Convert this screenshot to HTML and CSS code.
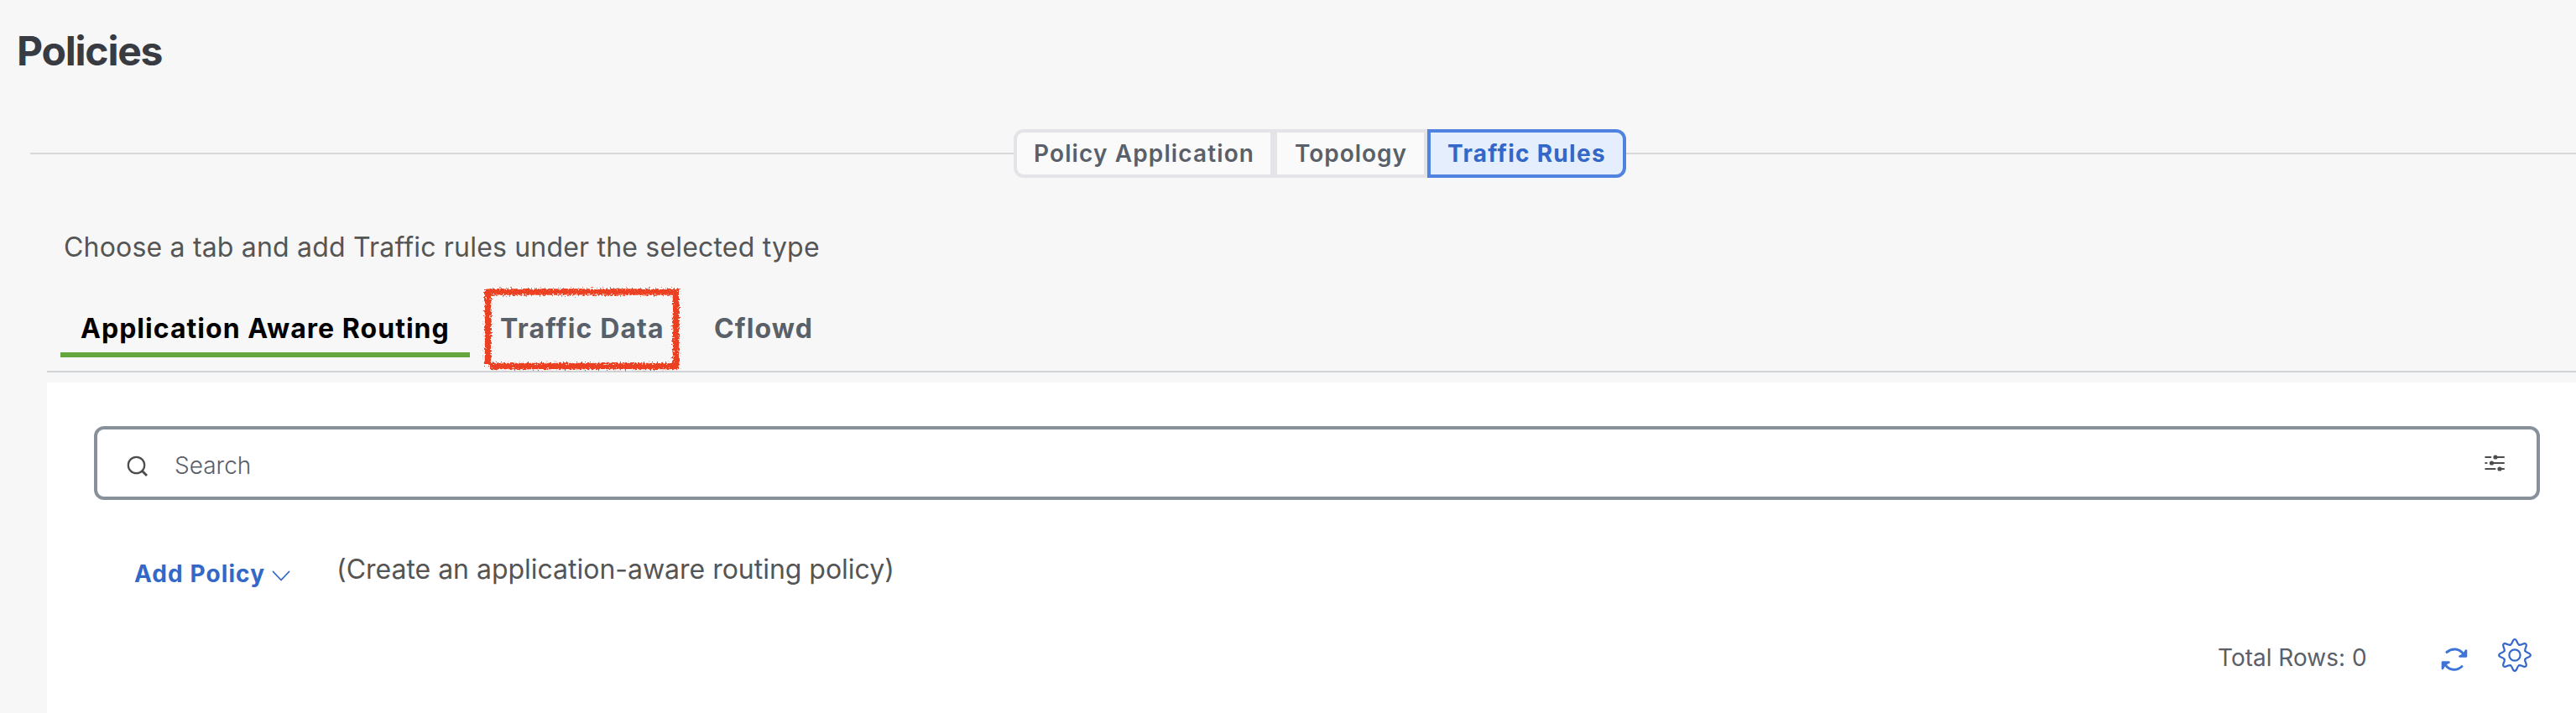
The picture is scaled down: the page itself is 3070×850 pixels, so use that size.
FILE: index.html
```
<!DOCTYPE html>
<html lang="en">
<head>
<meta charset="utf-8">
<title>Policies</title>
<link rel="stylesheet" href="styles.css">
</head>
<body>
<h1 class="title">Policies</h1>
<div class="steps">
  <div class="segments">
    <button class="seg first">Policy Application</button>
    <button class="seg second">Topology</button>
    <button class="seg active">Traffic Rules</button>
  </div>
</div>
<p class="hint">Choose a tab and add Traffic rules under the selected type</p>
<nav class="tabs">
  <a class="tab selected">Application Aware Routing</a>
  <a class="tab data">Traffic Data
    <svg class="marker" width="240" height="104" viewBox="0 0 240 104">
      <defs>
        <filter id="rough" x="-5%" y="-10%" width="110%" height="120%">
          <feTurbulence type="fractalNoise" baseFrequency="0.5" numOctaves="2" seed="4" result="n"/>
          <feDisplacementMap in="SourceGraphic" in2="n" scale="8" xChannelSelector="R" yChannelSelector="G"/>
        </filter>
      </defs>
      <path d="M8.500 95V8H232.500V96.500H11" fill="none" stroke="#ec4024" stroke-width="7.500" filter="url(#rough)"/>
    </svg>
  </a>
  <a class="tab">Cflowd</a>
</nav>
<main class="panel">
  <div class="search">
    <svg class="mag" width="26" height="26" viewBox="0 0 26 26" fill="none" stroke="#4c4c4c" stroke-width="2.200"><circle cx="11.500" cy="11.500" r="9.700"/><path d="M18 18l6 6" stroke-width="2.800"/></svg>
    <span class="ph">Search</span>
    <svg class="filter" width="26" height="22" viewBox="0 0 26 22" fill="#4c4c4c" stroke="#4c4c4c" stroke-width="2.200" stroke-linecap="round"><path d="M2.300 4h6M13 4h11M2.300 11h1.200M9 11h15M2.300 18h11.200M19 18h5"/><g stroke="none"><circle cx="14" cy="4" r="2.600"/><circle cx="9.500" cy="11" r="2.600"/><circle cx="19" cy="18" r="2.600"/></g></svg>
  </div>
  <div class="actions">
    <button class="add">Add Policy<svg width="22" height="14" viewBox="0 0 22 14" fill="none" stroke="#3367c8" stroke-width="1.800" stroke-linecap="round" stroke-linejoin="round"><path d="M1.500 1.500L11 11.500L20.500 1.500"/></svg></button>
    <span class="note">(Create an application-aware routing policy)</span>
  </div>
  <div class="footer">
    <span class="rows">Total Rows: 0</span>
    <svg class="refresh" width="34" height="30" viewBox="0 0 34 30" fill="none" stroke="#3e74d8" stroke-width="3" stroke-linecap="round" stroke-linejoin="round"><path d="M8 6.500C14 1.500 23 1.500 28 9M26 23.500C20 29 11 29 6 21"/><path d="M31 4.500V11.500H23.500L28 9.500Z M3 26V18.500H10.500L6 20.500Z" fill="#3e74d8" stroke-width="2.600"/></svg>
    <svg class="gear" width="42" height="42" viewBox="-21 -21 42 42" fill="none" stroke="#3367c8" stroke-width="2.200" stroke-linecap="round">
      <defs><path id="tooth" d="M-5.100-12.300C-2.300-13.500-3.200-18.800 0-18.800S2.300-13.500 5.100-12.300"/></defs>
      <circle r="6.600"/>
      <use href="#tooth"/><use href="#tooth" transform="rotate(45)"/><use href="#tooth" transform="rotate(90)"/><use href="#tooth" transform="rotate(135)"/><use href="#tooth" transform="rotate(180)"/><use href="#tooth" transform="rotate(225)"/><use href="#tooth" transform="rotate(270)"/><use href="#tooth" transform="rotate(315)"/>
    </svg>
  </div>
</main>
</body>
</html>
```
FILE: styles.css
```
* { box-sizing: border-box; }
body { margin: 0; width: 3070px; height: 850px; overflow: hidden; background: #f7f7f7; font-family: Inter, sans-serif; color: #555; }
button { font: inherit; background: none; border: 0; padding: 0; margin: 0; }
.title { margin: 0; padding: 30px 0 0 20px; height: 154px; font-size: 48px; line-height: 61px; font-weight: 700; letter-spacing: -1.200px; color: #383b41; }
.steps { display: flex; height: 58px; padding-left: 1208px; background: linear-gradient(#d8d8d8, #d8d8d8) 36px 28px / 100% 2px no-repeat; }
.segments { display: flex; }
.seg { height: 58px; border: 4px solid #e3e3e8; background: #fafafa; font-size: 28px; font-weight: 600; line-height: 48px; letter-spacing: 1.120px; color: #596069; text-align: left; padding-left: 20px; white-space: nowrap; }
.first { width: 310px; border-radius: 12px 0 0 12px; }
.second { width: 183px; padding-left: 21px; letter-spacing: .980px; }
.seg.active { width: 237px; border-color: #5083df; background: #e4eefc; color: #3367c8; font-weight: 700; letter-spacing: 1.280px; border-radius: 0 12px 12px 0; padding-left: 20px; }
.hint { margin: 0; padding: 62px 0 0 76px; height: 132px; font-size: 32px; line-height: 41px; letter-spacing: .190px; }
.tabs { display: flex; margin-left: 56px; height: 100px; padding-left: 16px; border-bottom: 2px solid #d0d4d9; }
.tab { position: relative; height: 82px; padding: 27px 24px 0; font-size: 32px; line-height: 41px; font-weight: 700; letter-spacing: 1.120px; color: #596069; white-space: nowrap; }
.selected { width: 488px; color: #000; letter-spacing: 1.040px; border-bottom: 6px solid #67a53f; }
.data { width: 267px; padding-left: 36px; }
.marker { position: absolute; left: 13px; top: -4px; }
.panel { margin: 12px 0 0 56px; height: 394px; background: #fff; padding: 52px 43px 0 56px; }
.search { display: flex; height: 88px; border: 4px solid #889099; border-radius: 12px; padding-left: 35px; }
.mag { margin-top: 31px; }
.ph { flex: 1; margin-left: 31px; font-size: 28px; line-height: 86px; height: 80px; font-weight: 300; color: #596069; }
.filter { margin: 29px 37px 0 0; }
.actions { display: flex; height: 158px; }
.add { display: flex; width: 241px; height: 34px; margin: 71px 0 0 48px; font-size: 28px; line-height: 34px; font-weight: 700; letter-spacing: 1.080px; color: #3367c8; }
.add svg { margin: 13px 0 0 8px; }
.note { margin-top: 62px; font-size: 32px; line-height: 41px; letter-spacing: -.020px; }
.footer { display: flex; padding-left: 2531px; color: #596069; }
.rows { width: 265px; margin-top: 12px; font-size: 28px; line-height: 36px; }
.refresh { margin-top: 17px; }
.gear { margin: 6px 0 0 34px; }
```
